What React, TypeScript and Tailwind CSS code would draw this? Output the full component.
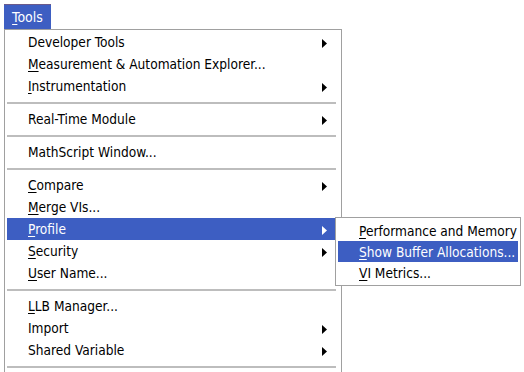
import { FC } from "react"

type Item = {
  label: string
  key?: number
  sub?: boolean
  active?: boolean
}

type Entry = Item | "sep"

const menu: Entry[] = [
  { label: "Developer Tools", sub: true },
  { label: "Measurement & Automation Explorer...", key: 0 },
  { label: "Instrumentation", key: 0, sub: true },
  "sep",
  { label: "Real-Time Module", sub: true },
  "sep",
  { label: "MathScript Window..." },
  "sep",
  { label: "Compare", key: 0, sub: true },
  { label: "Merge VIs...", key: 0 },
  { label: "Profile", key: 0, sub: true, active: true },
  { label: "Security", key: 0, sub: true },
  { label: "User Name...", key: 0 },
  "sep",
  { label: "LLB Manager...", key: 0 },
  { label: "Import", sub: true },
  { label: "Shared Variable", sub: true },
  "sep",
]

const profileMenu: Item[] = [
  { label: "Performance and Memory", key: 0 },
  { label: "Show Buffer Allocations...", key: 0, active: true },
  { label: "VI Metrics...", key: 0 },
]

const font = { fontFamily: '"DejaVu Sans Condensed", "DejaVu Sans", sans-serif' }

const Label: FC<{ text: string; at?: number }> = ({ text, at }) => {
  if (at === undefined) return <span className="whitespace-nowrap">{text}</span>
  return (
    <span className="whitespace-nowrap">
      {text.slice(0, at)}
      <span className="underline underline-offset-2">{text[at]}</span>
      {text.slice(at + 1)}
    </span>
  )
}

const Arrow: FC<{ white?: boolean }> = ({ white }) => (
  <svg width="5" height="9" viewBox="0 0 5 9" className="shrink-0">
    <polygon points="0,0 5,4.5 0,9" fill={white ? "#ffffff" : "#000000"} />
  </svg>
)

const Row: FC<{ item: Item; children?: React.ReactNode }> = ({ item, children }) => (
  <div
    className={`relative flex h-[22px] items-center justify-between pl-[21px] pr-[9px] pt-[2px] ${
      item.active ? "bg-[#3d5ec2] text-white" : "text-black"
    }`}
  >
    <Label text={item.label} at={item.key} />
    {item.sub && <Arrow white={item.active} />}
    {children}
  </div>
)

// flyout for the highlighted "Profile" entry, overlapping the parent's right edge
const SubMenu: FC = () => (
  <div className="absolute left-[328px] top-[-1px] z-10 w-[186px] border border-[#a0a0a0] bg-white p-[2px]">
    {profileMenu.map((item) => (
      <div
        key={item.label}
        className={`flex h-[21px] items-center overflow-hidden pl-[21px] pt-[2px] ${
          item.active ? "bg-[#3d5ec2] text-white" : "text-black"
        }`}
      >
        <Label text={item.label} at={item.key} />
      </div>
    ))}
  </div>
)

export default function App() {
  return (
    <div className="h-[372px] w-[524px] overflow-hidden bg-white pl-[4px] pt-[4px] text-[13.6px] leading-none" style={font}>
      <div className="flex h-[25px] w-[47px] items-center justify-center border-t border-[#6b5a8a] bg-[#3d5ec2] text-[14px] text-white">
        <Label text="Tools" at={0} />
      </div>
      <div className="w-[338px] border border-[#a0a0a0] bg-white pb-[20px] pl-[2px] pr-[5px] pt-[1px]">
        {menu.map((entry, i) =>
          entry === "sep" ? (
            <div key={i} className="flex h-[11px] items-center">
              <div className="h-[2px] w-full bg-[#bdbdbd]" />
            </div>
          ) : (
            <Row key={entry.label} item={entry}>
              {entry.active && <SubMenu />}
            </Row>
          )
        )}
      </div>
    </div>
  )
}
